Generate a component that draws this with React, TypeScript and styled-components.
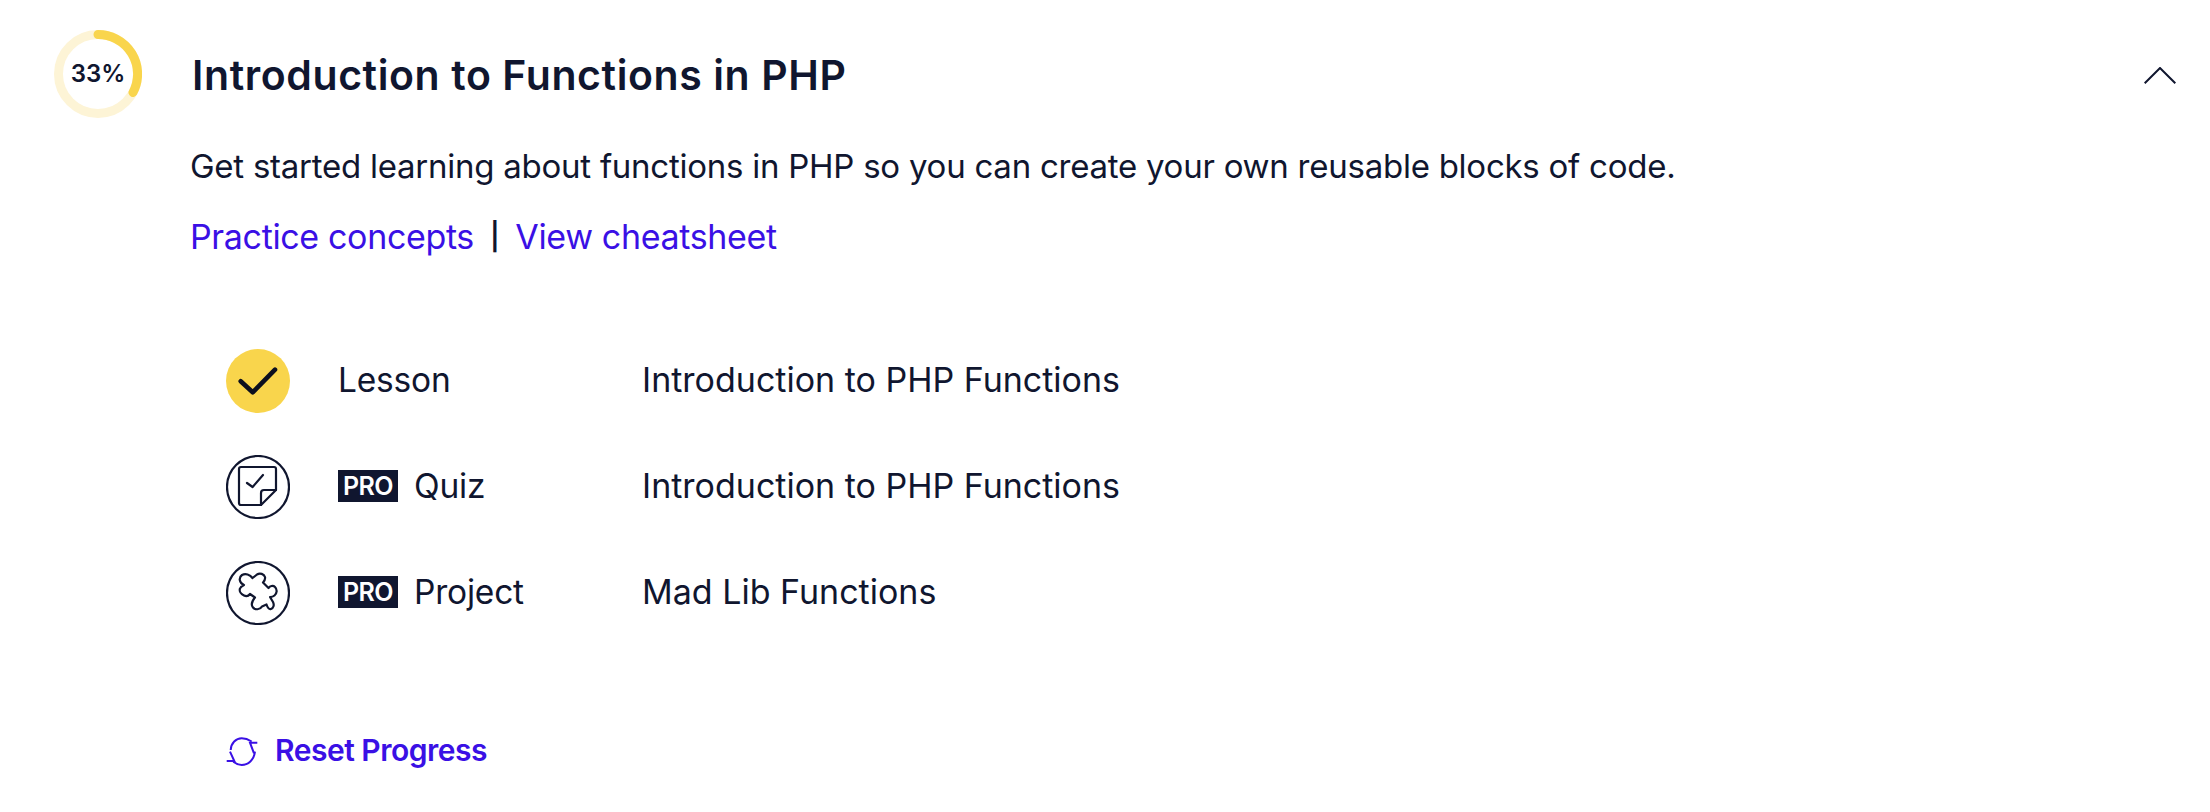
import React from "react";
import styled, { createGlobalStyle } from "styled-components";

const Global = createGlobalStyle`
  html, body { margin: 0; padding: 0; background: #fff; }
  body { font-family: "Inter", "Lato", sans-serif; color: #10162f; font-variant-ligatures: none; }
`;

const Page = styled.div`
  width: 2210px;
  height: 812px;
  padding: 30px 34px 0 54px;
  box-sizing: border-box;
  overflow: hidden;
`;

const Header = styled.header`
  display: flex;
  align-items: center;
  height: 88px;
`;

const Ring = styled.div`
  position: relative;
  width: 88px;
  height: 88px;
  flex: none;
`;

const RingLabel = styled.span`
  position: absolute;
  inset: 0;
  display: flex;
  align-items: center;
  justify-content: center;
  padding-bottom: 2px;
  box-sizing: border-box;
  font-size: 24px;
  font-weight: 600;
`;

const Title = styled.h2`
  margin: 2px 0 0 50px;
  flex: 1;
  font-size: 41px;
  line-height: 48px;
  font-weight: 600;
  letter-spacing: 0.6px;
  color: #10162f;
`;

const Chevron = styled.svg`
  width: 32px;
  height: 17px;
  flex: none;
  margin-top: 3px;
`;

const Body = styled.div`
  padding: 23px 0 0 136px;
`;

const Description = styled.p`
  margin: 0;
  font-size: 33px;
  line-height: 50px;
  letter-spacing: -0.25px;
`;

const Links = styled.div`
  display: flex;
  align-items: center;
  margin-top: 21px;
  font-size: 34px;
  line-height: 50px;
  letter-spacing: -0.35px;
`;

const TextLink = styled.a`
  color: #3a10e5;
  text-decoration: none;
`;

const Separator = styled.span`
  margin: 0 16px;
  font-size: 27px;
  font-weight: 600;
`;

const Rows = styled.ul`
  list-style: none;
  margin: 87px 0 0;
  padding: 0 0 0 36px;
`;

const Row = styled.li`
  display: grid;
  grid-template-columns: 64px 256px 1fr;
  column-gap: 48px;
  align-items: center;
  height: 64px;
  font-size: 34px;
  & + & {
    margin-top: 42px;
  }
`;

const Label = styled.div`
  display: flex;
  align-items: center;
  gap: 16px;
  padding-bottom: 3px;
  font-size: 33.5px;
  letter-spacing: -0.2px;
`;

const Name = styled.span`
  padding-bottom: 3px;
`;

const Pro = styled.span`
  display: inline-flex;
  align-items: center;
  justify-content: center;
  width: 60px;
  height: 32px;
  background: #10162f;
  color: #fff;
  font-size: 25px;
  font-weight: 600;
  letter-spacing: -0.5px;
`;

const Reset = styled.a`
  display: flex;
  align-items: center;
  gap: 17px;
  margin: 107px 0 0 36px;
  color: #3a10e5;
  font-size: 30px;
  font-weight: 600;
  letter-spacing: -0.5px;
  text-decoration: none;
`;

const Done = () => (
  <svg width="64" height="64" viewBox="0 0 64 64">
    <circle cx="32" cy="32" r="32" fill="#f9d54c" />
    <path d="M14.7 32.3 L26.7 43.3 L49 20.7" fill="none" stroke="#0c0f1e" strokeWidth="4.6" strokeLinecap="round" strokeLinejoin="round" />
  </svg>
);

const Quiz = () => (
  <svg width="64" height="64" viewBox="0 0 64 64" fill="none" stroke="#10162f" strokeWidth="2.2" strokeLinejoin="round" strokeLinecap="round">
    <circle cx="32" cy="32" r="31" />
    <path d="M13 14 a2 2 0 0 1 2 -2 H48 a2 2 0 0 1 2 2 V35 L35 50 H15 a2 2 0 0 1 -2 -2 Z" />
    <path d="M50 35 H38 a3 3 0 0 0 -3 3 V50" />
    <path d="M21 28 L26.6 32 L37 20" />
  </svg>
);

const Puzzle = () => (
  <svg width="64" height="64" viewBox="0 0 64 64" fill="none" stroke="#10162f" strokeWidth="2.2" strokeLinejoin="round" strokeLinecap="round">
    <circle cx="32" cy="32" r="31" />
    <path d="M18 24 C13 22 12.5 16.5 16 14 C19.5 12 24 13.5 26.5 17 L31 13.5 C34 11.5 38 13 39 16 C39.5 18.5 38.5 20 37 21.5 L42.5 27 C44 25 47 24 49 26 C51.5 28.5 51 32.5 48.5 34.5 C47 35.8 45.5 36 44 36 L47 41 C48.5 44 47.5 47 45 48 C43 48.7 41.5 46.5 40.5 43.5 L36 45.5 C34 49 29 49 27 46.5 C25 44 26 40 29 36.5 L24 33 C22.5 35 20 35.5 18 34.5 C15 33 13 30 14 27.5 C14.5 26 16 25 18 24 Z" />
  </svg>
);

const ResetIcon = () => (
  <svg width="32" height="32" viewBox="0 0 32 32" fill="none" stroke="#3a10e5" strokeWidth="2">
    <path d="M4.7 16 C5 9 10 4.3 15.7 4.3 C19 4.3 22 5.2 25.7 7.5" />
    <path d="M29 17.7 C28 26 22 31 15.7 31 C12.5 31 10 29.8 7.3 27.7" />
    <path d="M0.7 27 H8.3 L4 17.7" />
    <path d="M31.3 8.7 H24 L28 19.3" />
  </svg>
);

const items = [
  { Icon: Done, pro: false, kind: "Lesson", name: "Introduction to PHP Functions" },
  { Icon: Quiz, pro: true, kind: "Quiz", name: "Introduction to PHP Functions" },
  { Icon: Puzzle, pro: true, kind: "Project", name: "Mad Lib Functions" },
];

export default function App() {
  return (
    <>
      <Global />
      <Page>
        <Header>
          <Ring>
            <svg width="88" height="88" viewBox="0 0 88 88">
              <circle cx="44" cy="44" r="39.5" fill="none" stroke="#fdf4d6" strokeWidth="9" />
              <path d="M44 4.5 A39.5 39.5 0 0 1 79 62.5" fill="none" stroke="#f9d54c" strokeWidth="9" strokeLinecap="round" />
            </svg>
            <RingLabel>33%</RingLabel>
          </Ring>
          <Title>Introduction to Functions in PHP</Title>
          <Chevron viewBox="0 0 32 17" fill="none" stroke="#10162f" strokeWidth="2">
            <path d="M0.7 16.3 L16 1 L31.3 16.3" />
          </Chevron>
        </Header>
        <Body>
          <Description>Get started learning about functions in PHP so you can create your own reusable blocks of code.</Description>
          <Links>
            <TextLink href="#">Practice concepts</TextLink>
            <Separator>|</Separator>
            <TextLink href="#">View cheatsheet</TextLink>
          </Links>
          <Rows>
            {items.map(({ Icon, pro, kind, name }) => (
              <Row key={kind}>
                <Icon />
                <Label>
                  {pro && <Pro>PRO</Pro>}
                  <span>{kind}</span>
                </Label>
                <Name>{name}</Name>
              </Row>
            ))}
          </Rows>
          <Reset href="#">
            <ResetIcon />
            Reset Progress
          </Reset>
        </Body>
      </Page>
    </>
  );
}
